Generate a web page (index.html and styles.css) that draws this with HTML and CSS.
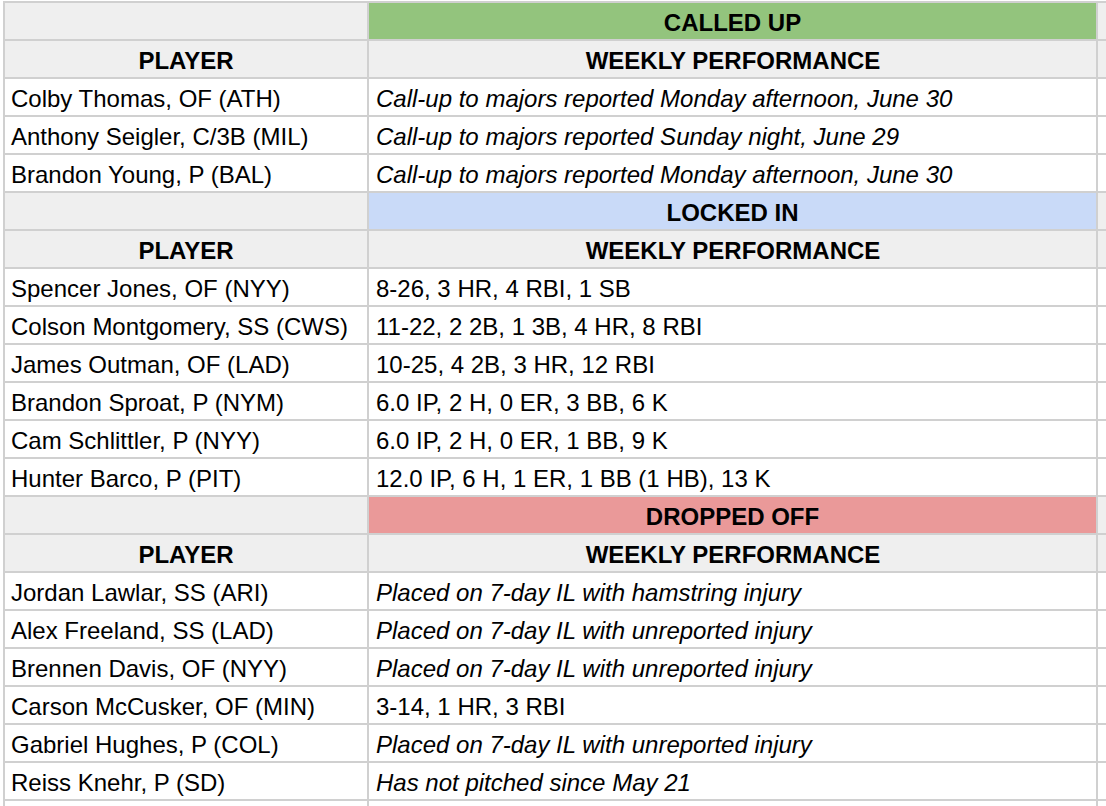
FILE: index.html
```html
<!DOCTYPE html>
<html lang="en">
<head>
<meta charset="utf-8">
<title>Prospect Report</title>
<link rel="stylesheet" href="styles.css">
</head>
<body>
<div class="sheet">
<table class="grid">
  <colgroup><col class="c-player"><col class="c-perf"><col class="c-extra"></colgroup>
  <tbody>
    <tr class="band"><td class="gray"></td><td class="title green">CALLED UP</td><td class="gray"></td></tr>
    <tr class="head"><td>PLAYER</td><td>WEEKLY PERFORMANCE</td><td></td></tr>
    <tr><td>Colby Thomas, OF (ATH)</td><td class="note">Call-up to majors reported Monday afternoon, June 30</td><td></td></tr>
    <tr><td>Anthony Seigler, C/3B (MIL)</td><td class="note">Call-up to majors reported Sunday night, June 29</td><td></td></tr>
    <tr><td>Brandon Young, P (BAL)</td><td class="note">Call-up to majors reported Monday afternoon, June 30</td><td></td></tr>

    <tr class="band"><td class="gray"></td><td class="title blue">LOCKED IN</td><td class="gray"></td></tr>
    <tr class="head"><td>PLAYER</td><td>WEEKLY PERFORMANCE</td><td></td></tr>
    <tr><td>Spencer Jones, OF (NYY)</td><td>8-26, 3 HR, 4 RBI, 1 SB</td><td></td></tr>
    <tr><td>Colson Montgomery, SS (CWS)</td><td>11-22, 2 2B, 1 3B, 4 HR, 8 RBI</td><td></td></tr>
    <tr><td>James Outman, OF (LAD)</td><td>10-25, 4 2B, 3 HR, 12 RBI</td><td></td></tr>
    <tr><td>Brandon Sproat, P (NYM)</td><td>6.0 IP, 2 H, 0 ER, 3 BB, 6 K</td><td></td></tr>
    <tr><td>Cam Schlittler, P (NYY)</td><td>6.0 IP, 2 H, 0 ER, 1 BB, 9 K</td><td></td></tr>
    <tr><td>Hunter Barco, P (PIT)</td><td>12.0 IP, 6 H, 1 ER, 1 BB (1 HB), 13 K</td><td></td></tr>

    <tr class="band"><td class="gray"></td><td class="title red">DROPPED OFF</td><td class="gray"></td></tr>
    <tr class="head"><td>PLAYER</td><td>WEEKLY PERFORMANCE</td><td></td></tr>
    <tr><td>Jordan Lawlar, SS (ARI)</td><td class="note">Placed on 7-day IL with hamstring injury</td><td></td></tr>
    <tr><td>Alex Freeland, SS (LAD)</td><td class="note">Placed on 7-day IL with unreported injury</td><td></td></tr>
    <tr><td>Brennen Davis, OF (NYY)</td><td class="note">Placed on 7-day IL with unreported injury</td><td></td></tr>
    <tr><td>Carson McCusker, OF (MIN)</td><td>3-14, 1 HR, 3 RBI</td><td></td></tr>
    <tr><td>Gabriel Hughes, P (COL)</td><td class="note">Placed on 7-day IL with unreported injury</td><td></td></tr>
    <tr><td>Reiss Knehr, P (SD)</td><td class="note">Has not pitched since May 21</td><td></td></tr>
    <tr><td></td><td></td><td></td></tr>
  </tbody>
</table>
</div>
</body>
</html>
```

FILE: styles.css
```css
html, body {
  margin: 0;
  padding: 0;
  background: #ffffff;
  overflow: hidden;
  width: 1106px;
  height: 806px;
}

.sheet {
  padding: 1px 0 0 3px;
}

.grid {
  table-layout: fixed;
  border-collapse: separate;
  border-spacing: 2px;
  background: #d0d0d0;
  width: 1105px;
  font-family: "Liberation Sans", Arial, sans-serif;
  font-size: 24px;
  color: #000000;
}

.c-player { width: 362px; }
.c-perf { width: 727px; }
.c-extra { width: 8px; }

.grid td {
  background: #ffffff;
  height: 32px;
  padding: 4px 6px 0 6px;
  line-height: 31px;
  white-space: nowrap;
  overflow: hidden;
  vertical-align: top;
}

.grid td:nth-child(2) {
  padding-left: 7px;
}

.grid td:nth-child(3) {
  padding: 4px 0 0 0;
}

.head td,
.band td {
  background: #efefef;
  font-weight: bold;
  text-align: center;
}

.grid td.title { padding-left: 6px; }

.band td.green { background: #93c47d; }
.band td.blue { background: #c9daf8; }
.band td.red { background: #ea9999; }

.note {
  font-style: italic;
}
```
